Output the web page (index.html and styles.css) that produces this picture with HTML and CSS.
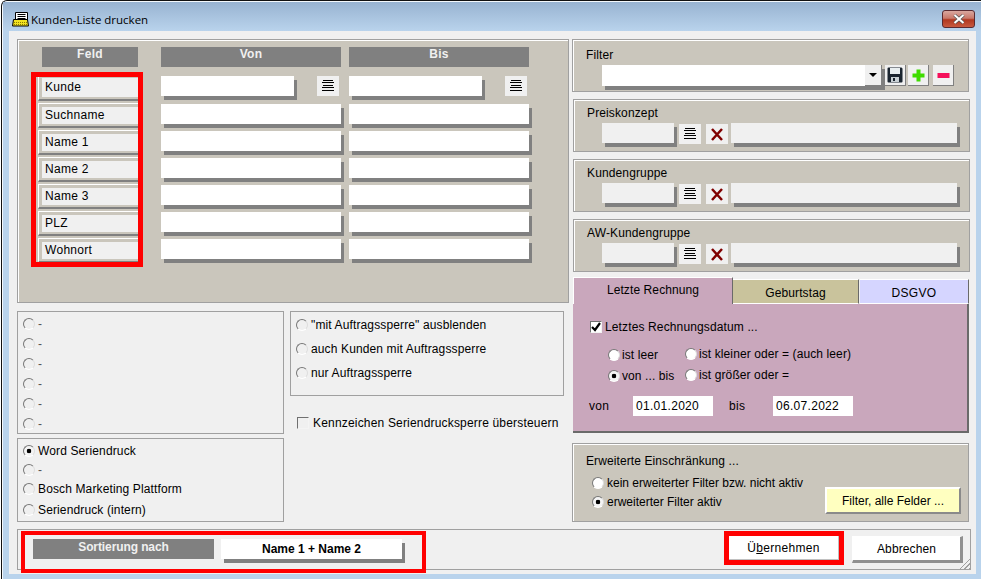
FILE: index.html
```html
<!DOCTYPE html>
<html lang="de">
<head>
<meta charset="utf-8">
<title>Kunden-Liste drucken</title>
<link rel="stylesheet" href="styles.css">
</head>
<body>
<svg class="defs" width="0" height="0" aria-hidden="true">
  <defs>
    <symbol id="list" viewBox="0 0 22 20">
      <path d="M6 4.500h10M5 6.500h12M6 9.500h10M5 11.500h12M5 14.500h12" stroke="#000" stroke-width="1" fill="none"/>
    </symbol>
    <symbol id="cross" viewBox="0 0 22 20">
      <path d="M6 5l10 11M16 5L6 16" stroke="#800000" stroke-width="2.500" fill="none"/>
    </symbol>
  </defs>
</svg>
<div class="window">
  <header class="titlebar">
    <svg class="title-icon" width="17" height="15" viewBox="0 0 17 15">
      <path d="M3.500 .5h12v8h-12z" fill="#fff" stroke="#000"/>
      <path d="M5.500 2.500h8M5.500 4.500h8M5.500 6.500h8" stroke="#000"/>
      <path d="M1.500 7.500h14l1 6.500h-16z" fill="#f2e21e" stroke="#000"/>
      <path d="M2 10.500h13M2 12.500h13" stroke="#8a7a00" stroke-dasharray="1 1"/>
    </svg>
    <span class="title-text">Kunden-Liste drucken</span>
    <div class="close-btn">
      <svg width="14" height="10" viewBox="0 0 14 10"><path d="M2.500 1l9 8M11.500 1l-9 8" stroke="#555" stroke-width="3.400"/><path d="M2.500 1l9 8M11.500 1l-9 8" stroke="#fff" stroke-width="2"/></svg>
    </div>
  </header>

  <main class="client">
    <div class="columns">
      <div class="col-left">
        <section class="panel main-panel">
          <div class="head head-feld">Feld</div>
          <div class="head">Von</div>
          <div class="head">Bis</div>

          <div class="field-names">
            <div class="name-cell name-first"><span class="name-inner name-inner-first">Kunde</span></div>
            <div class="name-cell"><span class="name-inner">Suchname</span></div>
            <div class="name-cell"><span class="name-inner">Name 1</span></div>
            <div class="name-cell"><span class="name-inner">Name 2</span></div>
            <div class="name-cell"><span class="name-inner">Name 3</span></div>
            <div class="name-cell"><span class="name-inner">PLZ</span></div>
            <div class="name-cell"><span class="name-inner">Wohnort</span></div>
          </div>

          <div class="inputs">
            <div class="input-row input-row-first"><div class="field white short"></div><svg class="icon-btn list-btn"><use href="#list"/></svg></div>
            <div class="input-row"><div class="field white full"></div></div>
            <div class="input-row"><div class="field white full"></div></div>
            <div class="input-row"><div class="field white full"></div></div>
            <div class="input-row"><div class="field white full"></div></div>
            <div class="input-row"><div class="field white full"></div></div>
            <div class="input-row"><div class="field white full"></div></div>
          </div>
          <div class="inputs">
            <div class="input-row input-row-first"><div class="field white short"></div><svg class="icon-btn list-btn"><use href="#list"/></svg></div>
            <div class="input-row"><div class="field white full"></div></div>
            <div class="input-row"><div class="field white full"></div></div>
            <div class="input-row"><div class="field white full"></div></div>
            <div class="input-row"><div class="field white full"></div></div>
            <div class="input-row"><div class="field white full"></div></div>
            <div class="input-row"><div class="field white full"></div></div>
          </div>
        </section>

        <div class="lower">
          <div class="lower-a">
            <section class="box box-a">
              <div class="opt"><span class="radio"></span><span class="dash">-</span></div>
              <div class="opt"><span class="radio"></span><span class="dash">-</span></div>
              <div class="opt"><span class="radio"></span><span class="dash">-</span></div>
              <div class="opt"><span class="radio"></span><span class="dash">-</span></div>
              <div class="opt"><span class="radio"></span><span class="dash">-</span></div>
              <div class="opt"><span class="radio"></span><span class="dash">-</span></div>
            </section>
            <section class="box box-b">
              <div class="opt"><span class="radio on"></span><span>Word Seriendruck</span></div>
              <div class="opt"><span class="radio"></span><span class="dash">-</span></div>
              <div class="opt"><span class="radio"></span><span>Bosch Marketing Plattform</span></div>
              <div class="opt opt-last"><span class="radio"></span><span>Seriendruck (intern)</span></div>
            </section>
          </div>
          <div class="lower-c">
            <section class="box box-c">
              <div class="opt"><span class="radio"></span><span>"mit Auftragssperre" ausblenden</span></div>
              <div class="opt"><span class="radio"></span><span>auch Kunden mit Auftragssperre</span></div>
              <div class="opt"><span class="radio"></span><span>nur Auftragssperre</span></div>
            </section>
            <div class="check-row">
              <span class="checkbox"></span><span>Kennzeichen Seriendrucksperre übersteuern</span>
            </div>
          </div>
        </div>
      </div>

      <div class="col-right">
        <section class="panel filter-panel">
          <div class="panel-label">Filter</div>
          <div class="filter-controls">
            <div class="field white combo"><div class="drop"><span class="arrow"></span></div></div>
            <div class="tool tool-save">
              <svg width="16" height="16" viewBox="0 0 16 16"><path d="M.5 1.500a1 1 0 0 1 1-1h13l1 1v13a1 1 0 0 1-1 1h-13a1 1 0 0 1-1-1z" fill="#1b2530"/><path d="M3 1h10v6H3z" fill="#e8eef0"/><path d="M4 10h8v5H4z" fill="#c8d0d4"/><path d="M6 11h2v3H6z" fill="#1b2530"/></svg>
            </div>
            <div class="tool tool-plus">
              <svg width="13" height="13" viewBox="0 0 13 13"><path d="M4.500 .5h4v4h4v4h-4v4h-4v-4h-4v-4h4z" fill="#3fdc00"/></svg>
            </div>
            <div class="tool tool-minus">
              <svg width="13" height="5" viewBox="0 0 13 5"><path d="M.5 0h12v5H.5z" fill="#f5105a"/></svg>
            </div>
          </div>
        </section>

        <section class="panel lookup">
          <div class="panel-label">Preiskonzept</div>
          <div class="lookup-controls">
            <div class="field grey code"></div>
            <svg class="icon-btn lookup-icon"><use href="#list"/></svg>
            <svg class="icon-btn lookup-icon"><use href="#cross"/></svg>
            <div class="field grey desc"></div>
          </div>
        </section>
        <section class="panel lookup">
          <div class="panel-label">Kundengruppe</div>
          <div class="lookup-controls">
            <div class="field grey code"></div>
            <svg class="icon-btn lookup-icon"><use href="#list"/></svg>
            <svg class="icon-btn lookup-icon"><use href="#cross"/></svg>
            <div class="field grey desc"></div>
          </div>
        </section>
        <section class="panel lookup">
          <div class="panel-label">AW-Kundengruppe</div>
          <div class="lookup-controls">
            <div class="field grey code"></div>
            <svg class="icon-btn lookup-icon"><use href="#list"/></svg>
            <svg class="icon-btn lookup-icon"><use href="#cross"/></svg>
            <div class="field grey desc"></div>
          </div>
        </section>

        <div class="tabs">
          <div class="tab tab-active">Letzte Rechnung</div>
          <div class="tab tab-birthday">Geburtstag</div>
          <div class="tab tab-gdpr">DSGVO</div>
        </div>
        <section class="tab-body">
          <div class="check-line">
            <span class="checkbox checked">
              <svg width="10" height="10" viewBox="0 0 10 10"><path d="M1 5l3 3 5-7" stroke="#000" stroke-width="2.200" fill="none"/></svg>
            </span>
            <span>Letztes Rechnungsdatum ...</span>
          </div>
          <div class="radio-grid">
            <div class="radio-col radio-col-a">
              <div class="opt"><span class="radio white"></span><span>ist leer</span></div>
              <div class="opt"><span class="radio white on"></span><span>von ... bis</span></div>
            </div>
            <div class="radio-col radio-col-b">
              <div class="opt"><span class="radio white"></span><span>ist kleiner oder = (auch leer)</span></div>
              <div class="opt"><span class="radio white"></span><span>ist größer oder =</span></div>
            </div>
          </div>
          <div class="date-row">
            <span class="date-label">von</span>
            <span class="date-input">01.01.2020</span>
            <span class="date-label date-label-bis">bis</span>
            <span class="date-input">06.07.2022</span>
          </div>
        </section>

        <section class="panel ext-panel">
          <div class="ext-left">
            <div class="panel-label">Erweiterte Einschränkung ...</div>
            <div class="opt ext-opt"><span class="radio white"></span><span>kein erweiterter Filter bzw. nicht aktiv</span></div>
            <div class="opt ext-opt"><span class="radio white on"></span><span>erweiterter Filter aktiv</span></div>
          </div>
          <button class="btn-yellow">Filter, alle Felder ...</button>
        </section>
      </div>
    </div>

    <footer class="footer">
      <div class="sort-group">
        <div class="sort-label">Sortierung nach</div>
        <div class="field white sort-value">Name 1 + Name 2</div>
      </div>
      <div class="actions">
        <button class="btn btn-primary">Ü<u>b</u>ernehmen</button>
        <button class="btn btn-cancel">Abbrechen</button>
      </div>
      <span class="grip"></span>
    </footer>
  </main>
</div>
</body>
</html>
```
FILE: styles.css
```css
* { box-sizing: border-box; }
html, body { margin: 0; padding: 0; background: #fff; }
body { width: 981px; height: 579px; overflow: hidden; font: 12px/14px "Liberation Sans", Arial, sans-serif; letter-spacing: .13px; color: #000; }
.defs { position: absolute; }

.window {
  margin-left: 1px; width: 980px; height: 579px;
  display: flex; flex-direction: column;
  border-left: 1px solid #111; border-top: 1px solid #111; border-top-left-radius: 6px;
  background: #b9d3ec;
  box-shadow: inset 1px 1px 0 #f4f8fc;
}
.titlebar {
  height: 29px; flex: none; display: flex; align-items: flex-start;
  padding-left: 9px;
  background: linear-gradient(#98b3d1, #b9d3ec);
  margin: 1px 0 0 1px;
}
.title-icon { margin-top: 10px; flex: none; }
.title-text { margin: 10px 0 0 2px; font-family: "Open Sans", sans-serif; font-size: 11.5px; letter-spacing: 0; line-height: 16px; color: #000; }
.close-btn {
  margin: 8px 6px 0 auto; width: 33px; height: 18px;
  border: 1px solid #5a2a30; border-radius: 3px;
  background: linear-gradient(#d9a79f 0, #c9796a 45%, #b03820 55%, #c85a40 100%);
  display: flex; align-items: center; justify-content: center;
}

.client {
  flex: 1; margin: 0 5px 5px 7px; padding: 8px 0 0 8px;
  background: #f0f0f0;
}
.columns { display: flex; }
.col-left { width: 552px; flex: none; }
.col-right { width: 398px; flex: none; margin-left: 3px; }

.panel { background: #cac6bc; border: 1px solid #a0a0a0; box-shadow: inset 1px 1px 0 #fff; }

.main-panel {
  height: 264px; padding: 7px 0 0 18px;
  display: grid; grid-template-columns: 117px 180px 180px; column-gap: 8px;
  grid-template-rows: 20px auto; row-gap: 9px; align-content: start;
  justify-content: start;
}
.head { background: #808080; color: #f0f0f0; font-weight: 700; text-align: center; letter-spacing: .3px; }
.head-feld { margin-left: 6px; width: 96px; }

.field-names { margin-top: 1px; width: 102px; height: 185px; padding-left: 2px; outline: 5px solid #f00; position: relative; z-index: 2; letter-spacing: .3px; }
.name-cell {
  height: 25px; margin-bottom: 2px; padding-top: 3px;
  border-top: 1px solid #fff; border-left: 1px solid #fff; border-bottom: 2px solid #808080;
}
.name-first { margin-top: -1px; padding-top: 1px; }
.name-inner { display: block; margin-left: 3px; height: 17px; padding-left: 3px; background: #f0f0f0; line-height: 17px; }
.name-inner-first { height: 19px; line-height: 19px; }

.inputs { display: flex; flex-direction: column; gap: 7px; }
.input-row { display: flex; height: 20px; flex: none; }
.input-row-first { margin-bottom: 1px; }

.field { height: 20px; box-shadow: 3px 4px 0 #808080; flex: none; }
.white { background: #fff; }
.grey { background: #f0f0f0; }
.short { width: 133px; }
.full { width: 180px; }

.icon-btn { width: 22px; height: 20px; background: #f0f0f0; flex: none; display: block; }
.list-btn { margin-left: 23px; }

.panel-label { line-height: 14px; }

.filter-panel { width: 397px; height: 53px; padding: 8px 0 0 13px; }
.filter-controls { display: flex; margin: 3px 0 0 16px; }
.combo { width: 280px; height: 21px; display: flex; justify-content: flex-end; }
.drop {
  width: 17px; height: 21px; background: #f0f0f0;
  border-right: 1px solid #808080; border-bottom: 1px solid #808080;
  display: flex; align-items: center; justify-content: center;
}
.arrow { width: 0; height: 0; border-left: 4px solid transparent; border-right: 4px solid transparent; border-top: 4px solid #000; }
.tool {
  width: 21px; height: 21px; background: #f0f0f0; flex: none;
  border-right: 1px solid #808080; border-bottom: 1px solid #808080;
  display: flex; align-items: center; justify-content: center;
}
.tool-save { margin-left: 3px; }
.tool-plus { margin-left: 2px; }
.tool-minus { margin-left: 4px; }

.lookup { margin: 7px 0 0 1px; width: 397px; height: 53px; padding: 6px 0 0 13px; }
.lookup-controls { display: flex; margin: 3px 0 0 15px; }
.code { width: 72px; }
.lookup-icon { margin: 1px 0 0 5px; }
.desc { width: 226px; margin-left: 3px; }

.tabs { margin: 5px 0 0 1px; display: flex; align-items: flex-end; height: 27px; width: 396px; }
.tab { text-align: center; border-top: 1px solid #fff; border-right: 1px solid #6a6a6a; letter-spacing: .1px; }
.tab-active { width: 160px; height: 27px; background: #c9a7bc; padding-top: 5px; border-left: 1px solid #fff; }
.tab-birthday { width: 126px; height: 25px; background: #c9c39c; padding-top: 6px; border-bottom: 1px solid #fff; }
.tab-gdpr { width: 109px; height: 25px; background: #d5d5ff; padding-top: 6px; margin-left: 1px; border-bottom: 1px solid #fff; letter-spacing: .3px; }

.tab-body {
  margin-left: 1px; width: 396px; height: 129px;
  background: #c9a7bc; border-right: 2px solid #6a6a6a; border-bottom: 2px solid #6a6a6a;
  padding: 16px 0 0 17px;
}
.check-line { display: flex; align-items: center; gap: 3px; height: 14px; }
.checkbox { width: 12px; height: 12px; flex: none; background: #f0f0f0; border: 1px solid #707070; border-right-color: #f4f4f4; border-bottom-color: #f4f4f4; display: flex; align-items: center; justify-content: center; }
.checked { background: #fff; }
.radio-grid { display: flex; margin: 14px 0 0 18px; }
.radio-col { display: flex; flex-direction: column; gap: 7px; }
.radio-col .opt { gap: 2px; letter-spacing: .1px; }
.radio-col-a { width: 77px; }
.radio-col-b { margin-top: -1px; }
.date-row { display: flex; align-items: center; margin: 13px 0 0 -1px; letter-spacing: .3px; }
.date-label { width: 44px; }
.date-label-bis { margin-left: 16px; }
.date-input { width: 80px; height: 20px; background: #fff; padding-left: 3px; line-height: 20px; }

.opt { display: flex; align-items: center; gap: 3px; height: 14px; }
.radio {
  width: 12px; height: 12px; flex: none; border-radius: 50%;
  border: 1px solid; border-color: #777 #ddd #fff #777;
  background: #f0f0f0;
}
.radio.white { background: #fff; }
.radio.on { background: radial-gradient(circle, #000 0 2px, #f4f4f4 2.6px); }
.dash { color: #555; }

.ext-panel { margin-top: 10px; width: 397px; height: 79px; display: flex; justify-content: space-between; align-items: flex-end; padding: 0 7px 7px 13px; letter-spacing: 0; }
.ext-left { align-self: flex-start; padding-top: 10px; }
.ext-left .panel-label { margin-bottom: 8px; letter-spacing: .1px; }
.ext-opt { margin-left: 6px; margin-top: 5px; }
.btn-yellow {
  width: 136px; height: 27px; padding: 0; font: inherit; letter-spacing: 0; color: #000;
  background: #ffffc0; border: 2px solid; border-color: #fff #8a8a8a #8a8a8a #fff;
}

.lower { display: flex; gap: 6px; margin-top: 8px; }
.lower-a { width: 267px; flex: none; }
.lower-c { width: 274px; flex: none; }
.box { background: #f0f0f0; border: 1px solid #a0a0a0; padding: 5px 0 0 5px; display: flex; flex-direction: column; }
.box-a { height: 123px; gap: 6px; }
.box-b { height: 84px; margin-top: 4px; gap: 5px; }
.opt-last { margin-top: 2px; }
.box-c { height: 85px; gap: 10px; padding-top: 6px; }
.check-row { display: flex; align-items: center; gap: 4px; height: 14px; margin: 20px 0 0 7px; white-space: nowrap; letter-spacing: .18px; }

.footer {
  position: relative; margin-top: 7px; width: 954px; height: 41px;
  background: #f0f0f0; border: 1px solid #a0a0a0;
  display: flex; justify-content: space-between;
}
.sort-group { margin: 5px 0 0 7px; width: 397px; height: 34px; padding: 4px 0 0 8px; display: flex; gap: 7px; outline: 4px solid #f00; }
.sort-label { width: 181px; height: 20px; background: #808080; color: #f0f0f0; font-weight: 700; text-align: center; line-height: 16px; letter-spacing: -.1px; }
.sort-value { width: 181px; font-weight: 700; text-align: center; line-height: 21px; letter-spacing: 0; }
.actions { display: flex; align-items: flex-start; margin: 6px 7px 0 0; gap: 13px; }
.btn { padding: 0; font: inherit; letter-spacing: .1px; color: #000; background: #fff; }
.btn-primary { width: 110px; height: 24px; border: 0; border-right: 1px solid #c0c0c0; border-bottom: 1px solid #c0c0c0; outline: 5px solid #f00; letter-spacing: .3px; }
.btn-cancel { width: 111px; height: 27px; border: 1px solid #fff; border-right: 3px solid #909090; border-bottom: 3px solid #909090; }
.grip {
  position: absolute; right: 0; bottom: 0; width: 13px; height: 13px;
  background: repeating-linear-gradient(135deg, transparent 0 2px, #a0a0a0 2px 3px);
  clip-path: polygon(100% 0, 100% 100%, 0 100%);
}
```
